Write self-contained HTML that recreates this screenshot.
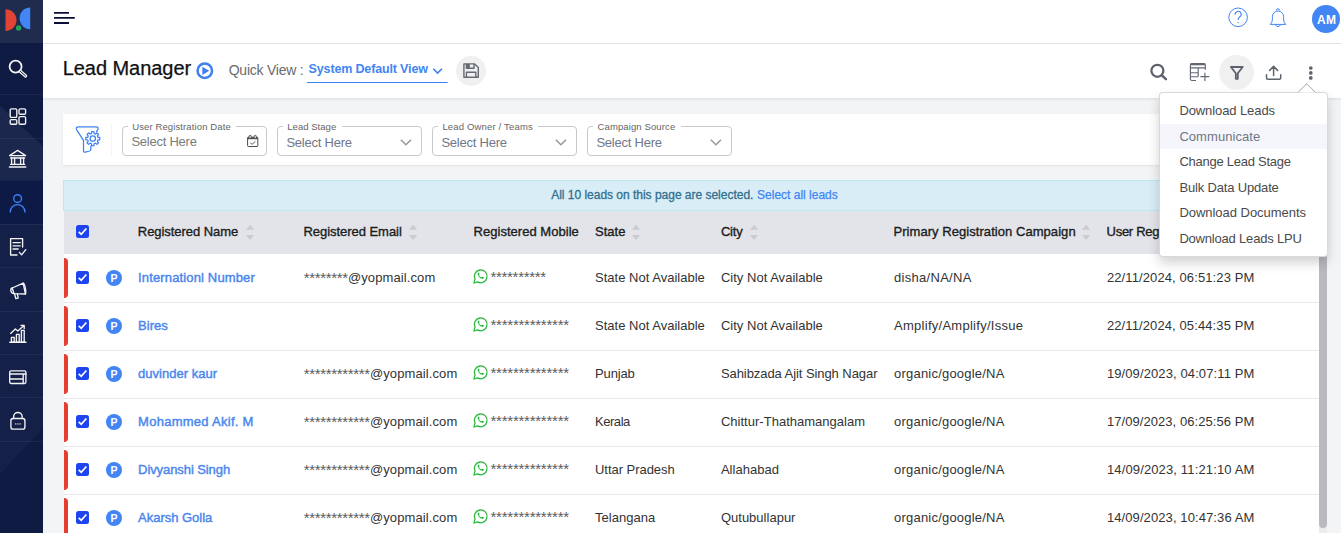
<!DOCTYPE html>
<html lang="en">
<head>
<meta charset="utf-8">
<title>Lead Manager</title>
<style>
*{box-sizing:border-box;margin:0;padding:0}
html,body{width:1341px;height:533px;overflow:hidden;background:#f3f4f6;font-family:"Liberation Sans",Arial,sans-serif;}
body{position:relative}
.abs{position:absolute}
span.t{position:absolute;white-space:pre;line-height:20px;height:20px}
#side{left:0;top:0;width:43px;height:533px;background:#0f1b43;overflow:hidden}
#side .logo{left:0;top:0;width:43px;height:42.5px;background:#1f2c4e}
#side .sep{left:0;width:43px;height:1px;background:rgba(255,255,255,.055)}
#side .band{left:-40px;top:70px;width:120px;height:120px;background:linear-gradient(135deg,rgba(255,255,255,0) 0%,rgba(255,255,255,0) 49%,rgba(255,255,255,.07) 50%,rgba(255,255,255,.05) 100%);}
#top{left:43px;top:0;width:1298px;height:44px;background:#fff;border-bottom:1px solid #e6e6e6}
#title{left:43px;top:44px;width:1298px;height:54px;background:#fff;box-shadow:0 1px 3px rgba(0,0,0,.10)}
#card{left:63px;top:114px;width:1264px;height:51px;background:#fff;box-shadow:0 1px 2px rgba(0,0,0,.07)}
.fld{top:126px;width:145px;height:29.5px;border:1px solid #c9c9c9;border-radius:4px}
.notch{top:125px;height:3px;background:#fff}
#banner{left:63px;top:180px;width:1264px;height:31px;background:#d9edf7;border:1px solid #bce8f1}
#thead{left:64px;top:210.5px;width:1255px;height:43.8px;background:#e2e4e9}
#tbody{left:64px;top:254.3px;width:1255px;height:279px;background:#fff}
.rs{left:64px;width:1255px;height:1px;background:#e9e9e9}
.red{left:64px;width:4px;height:40px;background:#e53e31;border-radius:0 4px 4px 0}
.cb{left:76px;width:13px;height:13px;background:#1a56e6;border-radius:2px}
.pb{left:106px;width:16px;height:16px;border-radius:8px;background:#4285f4}
#sbar{left:1319px;top:210px;width:8px;height:323px;background:#ececee}
#sthumb{left:1319px;top:210px;width:8px;height:318px;background:#b9babd;border-radius:0 0 4px 4px}
#dd{left:1158.5px;top:91.6px;width:169.5px;height:165.4px;background:#fff;border:1px solid rgba(0,0,0,.15);border-radius:4px;box-shadow:0 6px 12px rgba(0,0,0,.175)}
#ddarrow{left:1299.25px;top:86.3px;width:15.5px;height:15.5px;background:#fff;border-left:1px solid rgba(0,0,0,.34);border-top:1px solid rgba(0,0,0,.34);transform:rotate(45deg);clip-path:polygon(0 0,13.6px 0,0 13.6px)}
#ddhl{left:1159.5px;top:124px;width:167.5px;height:25px;background:#f5f6fb}
svg{position:absolute;overflow:visible}
</style>
</head>
<body>
<!-- top bar -->
<div id="top" class="abs"></div>
<div id="title" class="abs"></div>

<!-- sidebar -->
<div id="side" class="abs">
  <svg style="left:0;top:0" width="43" height="533"><path d="M0 106 L43 146.500 V180.500 H0 Z" fill="rgba(255,255,255,.055)"/><path d="M0 224 H43 V428 L0 474 Z" fill="rgba(255,255,255,.022)"/></svg>
  <div class="logo abs"></div>
  <div class="sep abs" style="top:93.5px"></div>
  <div class="sep abs" style="top:137.5px"></div>
  <div class="sep abs" style="top:180.5px"></div>
  <div class="sep abs" style="top:224px"></div>
  <div class="sep abs" style="top:267px"></div>
  <div class="sep abs" style="top:310.5px"></div>
  <div class="sep abs" style="top:354px"></div>
  <div class="sep abs" style="top:397px"></div>
  <div class="sep abs" style="top:440.5px"></div>
  <div class="abs" style="left:0;top:180.5px;width:43px;height:43.5px;background:#0c1a45"></div>
</div>
<!-- logo -->
<svg style="left:0;top:0" width="43" height="43" viewBox="0 0 43 43">
  <path d="M5.5 9.3 A11 10.8 0 0 1 5.5 30.9 Z" fill="#e04435"/>
  <path d="M30.2 7.4 A10.6 10.9 0 0 0 30.2 29.2 Z" fill="#4285f4"/>
  <circle cx="18.6" cy="27.9" r="2.7" fill="#1ea45a"/>
</svg>
<!-- sidebar icons -->
<svg style="left:0;top:43px" width="43" height="490" viewBox="0 43 43 490" fill="none" stroke="#f4f4f4" stroke-width="1.35" stroke-linecap="round" stroke-linejoin="round">
  <!-- search -->
  <circle cx="15.6" cy="66.6" r="6" stroke-width="1.8"/>
  <path d="M20.2 71.2 L25.6 76" stroke-width="3.2"/>
  <path d="M20.4 71.4 L25.4 75.8" stroke="#0f1b43" stroke-width="1"/>
  <!-- dashboard -->
  <rect x="10.2" y="108.8" width="6.6" height="8.6" rx="1.2"/>
  <rect x="19" y="108.8" width="6.6" height="5.4" rx="1.2"/>
  <rect x="10.2" y="119.6" width="6.6" height="4.6" rx="1.2"/>
  <rect x="19" y="116.6" width="6.6" height="7.6" rx="1.2"/>
  <!-- institution -->
  <path d="M9.6 155.6 L17.6 150.4 L25.6 155.6 Z"/>
  <path d="M11.6 158 V164 M14.6 158 V164 M20.6 158 V164 M23.6 158 V164" />
  <path d="M10.6 158 H24.6 M10.6 164.4 H24.6 M9.4 167 H25.8"/>
  <!-- person -->
  <g stroke="#3d7ff5" stroke-width="1.4">
  <circle cx="17.6" cy="198.6" r="3.9"/>
  <path d="M10.2 212 A7.4 7.4 0 0 1 25 212"/>
  </g>
  <!-- doc check -->
  <path d="M22.6 247 V238.6 H10.6 V255 H17"/>
  <path d="M13 242.6 H20.2 M13 245.8 H20.2 M13 249 H18.2"/>
  <path d="M19.4 252.4 L21.6 254.8 L25.8 249.6"/>
  <!-- megaphone -->
  <path d="M12.2 288 L23.2 283.2 L25.4 294 L14 293.6 Z"/>
  <path d="M12.2 288 C9.8 288.8 10.6 293.6 14 293.6"/>
  <path d="M14.6 294 L15.8 298.6 L18.2 298.2 L17.4 294"/>
  <path d="M23.2 283.2 C24.8 283 26.6 293 25.4 294"/>
  <!-- chart -->
  <path d="M9.8 342.2 H26"/>
  <rect x="11.4" y="337.4" width="2.8" height="4.8"/>
  <rect x="16.4" y="334.4" width="2.8" height="7.8"/>
  <rect x="21.4" y="330.4" width="2.8" height="11.8"/>
  <path d="M10.6 333.4 L15.4 329 L17.8 331 L24 325.6 M21 325.4 H24.2 V328.6"/>
  <!-- card -->
  <rect x="9.700" y="370.900" width="16.200" height="12.600" rx="1.400"/>
  <path d="M9.700 374 H25.900 M9.700 379 H23.200 M23.200 374 V383.500"/>
  <!-- lock -->
  <rect x="10.900" y="418.500" width="14" height="10.600" rx="2.200"/>
  <path d="M13.600 418.300 V416.800 A4.300 4.300 0 0 1 22.200 416.800 V418.300"/>
  <path d="M15.700 423.900 h0.100 M17.900 423.900 h0.100 M20.100 423.900 h0.100" stroke-width="1.300"/>
</svg>

<!-- hamburger -->
<svg style="left:43px;top:0" width="60" height="43" viewBox="43 0 60 43" stroke="#0a0f3a" stroke-width="1.9" fill="none">
  <path d="M54 12.9 H69 M54 17.9 H74.8 M54 23 H69"/>
</svg>

<!-- top right icons -->
<svg style="left:1220px;top:0" width="121" height="43" viewBox="1220 0 121 43" fill="none" stroke="#4285f4" stroke-width="1">
  <circle cx="1238.1" cy="17.3" r="9.3"/>
  <path d="M1235.2 14.6 A3 3 0 1 1 1239.6 17 C1238.4 17.8 1238.1 18.4 1238.1 20" stroke-width="1.1"/>
  <circle cx="1238.1" cy="22.6" r="0.7" fill="#4285f4" stroke="none"/>
  <!-- bell -->
  <path d="M1270.2 24.4 C1272.4 22.6 1272.4 20 1272.4 16.6 A5.6 5.6 0 0 1 1283.6 16.6 C1283.6 20 1283.6 22.6 1285.8 24.4 Z" stroke-linejoin="round"/>
  <path d="M1276.4 10.4 A1.6 1.6 0 0 1 1279.6 10.4"/>
  <path d="M1275.600 24.800 A2.600 2.900 0 0 0 1280.400 24.800"/>
  <circle cx="1326" cy="19" r="14" fill="#4285f4" stroke="none"/>
</svg>

<!-- title bar icons -->
<svg style="left:190px;top:44px" width="310" height="54" viewBox="190 44 310 54" fill="none">
  <circle cx="204.800" cy="70.700" r="7.250" stroke="#3f7ff0" stroke-width="2.500"/>
  <path d="M202.300 66.700 L209.200 70.800 L202.300 74.900 Z" fill="#3f7ff0"/>
  <path d="M433.300 68.700 L437.600 73.100 L441.900 68.700" stroke="#3f7ff0" stroke-width="1.600"/>
  <path d="M307 82.500 H447.600" stroke="#3f83f0" stroke-width="1.100"/>
  <circle cx="471" cy="70.800" r="15" fill="#f0f0f0"/>
  <g stroke="#646a72" stroke-width="1.400" stroke-linejoin="round">
  <path d="M463.900 63.900 H474.700 L478.300 67.400 V77.300 H463.900 Z"/>
  <path d="M466.400 64 V68.300 H474 V64"/>
  <rect x="466.400" y="64" width="3.400" height="4.300" fill="#646a72" stroke="none"/>
  <path d="M466.400 77.200 V72.200 H475.800 V77.200"/>
  </g>
</svg>
<svg style="left:1140px;top:44px" width="201" height="54" viewBox="1140 44 201 54" fill="none" stroke="#5d636d">
  <circle cx="1157.400" cy="70.800" r="6" stroke-width="2.300"/>
  <path d="M1161.900 75.300 L1165.900 79.200" stroke-width="2.500" stroke-linecap="round"/>
  <!-- table plus -->
  <g stroke-width="1.15" stroke="#616874">
  <path d="M1205.300 69.800 V65.200 Q1205.300 63.600 1203.700 63.600 H1192 Q1190.400 63.600 1190.400 65.200 V79 Q1190.400 80.500 1192 80.500 H1196"/>
  <path d="M1190.400 64.400 H1205.300" stroke-width="1.8"/>
  <path d="M1190.400 67.800 H1205.300 M1190.400 72.700 H1198.200 M1190.400 76.700 H1198.200 M1198.200 67.800 V76.700"/>
  <path d="M1204.900 72.800 V81 M1200.400 76.600 H1209.300"/>
  </g>
  <circle cx="1236.600" cy="72.300" r="17.400" fill="#f0f0f0" stroke="none"/>
  <path d="M1230.900 67 H1242.700 L1237.800 73.200 V78.800 H1235.800 V73.200 Z" stroke-width="1.8" stroke-linejoin="round" fill="none"/>
  <!-- upload -->
  <g stroke-width="1.5" stroke-linecap="round" stroke-linejoin="round">
  <path d="M1273.600 75.400 V66.600 M1269.600 70.400 L1273.600 66.400 L1277.600 70.400"/>
  <path d="M1266.500 74.800 V77.800 Q1266.500 79.300 1268 79.300 H1279.200 Q1280.700 79.300 1280.700 77.800 V74.800"/>
  </g>
  <g fill="#5d636d" stroke="none">
  <circle cx="1310.800" cy="68" r="1.850"/><circle cx="1310.800" cy="72.950" r="1.850"/><circle cx="1310.800" cy="77.900" r="1.850"/>
  </g>
</svg>

<!-- filter card -->
<div id="card" class="abs"></div>
<div class="abs" style="left:111px;top:124px;width:1px;height:32px;background:#f4f4f4"></div>
<div class="fld abs" style="left:122px"></div>
<div class="fld abs" style="left:277px"></div>
<div class="fld abs" style="left:432px"></div>
<div class="fld abs" style="left:587px"></div>
<div class="notch abs" style="left:127.5px;width:108px"></div>
<div class="notch abs" style="left:282.5px;width:59px"></div>
<div class="notch abs" style="left:437.5px;width:100.5px"></div>
<div class="notch abs" style="left:592.5px;width:88px"></div>
<svg style="left:63px;top:114px" width="700" height="51" viewBox="63 114 700 51" fill="none">
  <!-- funnel gear -->
  <g stroke="#3f83f0" stroke-width="1.25" stroke-linejoin="round" stroke-linecap="round">
  <path d="M83.500 140.300 L76.500 129.600 Q75.600 126.900 78.400 126.900 H96 Q98.800 126.900 97.900 129.400 L96.600 131.600"/>
  <path d="M83.500 140.300 V150.600 Q83.500 152.700 85.500 152.100 L89.600 151 Q90.800 150.600 90.800 149.400 V146"/>
  <circle cx="92.800" cy="138.600" r="2.7"/>
  <path d="M91.52 133.46 L91.63 131.60 L93.97 131.60 L94.08 133.46 L95.53 134.06 L96.93 132.82 L98.58 134.47 L97.34 135.87 L97.94 137.32 L99.80 137.43 L99.80 139.77 L97.94 139.88 L97.34 141.33 L98.58 142.73 L96.93 144.38 L95.53 143.14 L94.08 143.74 L93.97 145.60 L91.63 145.60 L91.52 143.74 L90.07 143.14 L88.67 144.38 L87.02 142.73 L88.26 141.33 L87.66 139.88 L85.80 139.77 L85.80 137.43 L87.66 137.32 L88.26 135.87 L87.02 134.47 L88.67 132.82 L90.07 134.06 Z"/>
  </g>
  <!-- calendar -->
  <g stroke="#4a4a4a" stroke-width="1">
  <rect x="247.600" y="137.200" width="10.200" height="9.300" rx="0.8"/>
  <rect x="247.600" y="137.200" width="10.200" height="2" fill="#4a4a4a" stroke="none"/>
  <rect x="249.100" y="135.300" width="2" height="3.400" rx="1" fill="#dfe8f5" stroke-width="0.9"/>
  <rect x="254.300" y="135.300" width="2" height="3.400" rx="1" fill="#dfe8f5" stroke-width="0.9"/>
  <path d="M250.300 142.800 L252.100 144.300 L255.400 141.400" stroke-width="0.9"/>
  </g>
  <g stroke="#979797" stroke-width="1.5">
  <path d="M400.8 139.8 L405.9 144.8 L411 139.8"/>
  <path d="M555.8 139.8 L560.9 144.8 L566 139.8"/>
  <path d="M710.8 139.8 L715.900 144.8 L721 139.8"/>
  </g>
</svg>

<!-- banner + table -->
<div id="banner" class="abs"></div>
<div id="thead" class="abs"></div>
<div id="tbody" class="abs"></div>
<div class="rs abs" style="top:302px"></div>
<div class="rs abs" style="top:350px"></div>
<div class="rs abs" style="top:398px"></div>
<div class="rs abs" style="top:446px"></div>
<div class="rs abs" style="top:494px"></div>
<svg style="left:245.9px;top:224px" width="9" height="17" viewBox="0 0 9 17"><path d="M0 5.800 L4.100 0.800 L8.200 5.800 Z M0 11.100 L4.100 15.900 L8.200 11.100 Z" fill="#cacbcf"/></svg>
<svg style="left:408.5px;top:224px" width="9" height="17" viewBox="0 0 9 17"><path d="M0 5.800 L4.100 0.800 L8.200 5.800 Z M0 11.100 L4.100 15.900 L8.200 11.100 Z" fill="#cacbcf"/></svg>
<svg style="left:632.3px;top:224px" width="9" height="17" viewBox="0 0 9 17"><path d="M0 5.800 L4.100 0.800 L8.200 5.800 Z M0 11.100 L4.100 15.900 L8.200 11.100 Z" fill="#cacbcf"/></svg>
<svg style="left:750px;top:224px" width="9" height="17" viewBox="0 0 9 17"><path d="M0 5.800 L4.100 0.800 L8.200 5.800 Z M0 11.100 L4.100 15.900 L8.200 11.100 Z" fill="#cacbcf"/></svg>
<svg style="left:1081.8px;top:224px" width="9" height="17" viewBox="0 0 9 17"><path d="M0 5.800 L4.100 0.800 L8.200 5.800 Z M0 11.100 L4.100 15.900 L8.200 11.100 Z" fill="#cacbcf"/></svg>
<svg style="left:76px;top:225px" width="13" height="13" viewBox="0 0 13 13"><rect width="13" height="13" rx="2.500" fill="#1d44ee"/><path d="M2.700 6.900 L5.200 9.300 L10.400 3.500" fill="none" stroke="#fff" stroke-width="1.700"/></svg>
<div class="red abs" style="top:258px"></div>
<svg style="left:76px;top:271px" width="13" height="13" viewBox="0 0 13 13"><rect width="13" height="13" rx="2.500" fill="#1d44ee"/><path d="M2.700 6.900 L5.200 9.300 L10.400 3.500" fill="none" stroke="#fff" stroke-width="1.700"/></svg>
<div class="pb abs" style="top:270.2px"></div>
<svg style="left:473px;top:268px" width="15" height="16" viewBox="0 0 15 16" fill="none"><path d="M1 15 L2 11.3 A6.4 6.4 0 1 1 4.500 13.9 Z" stroke="#2bb741" stroke-width="1.3" stroke-linejoin="round"/><path d="M5.2 4.6 C4.2 5.4 4.6 7.2 6.100 8.900 C7.6 10.6 9.4 11.400 10.5 10.600 C11 10.200 11 9.700 10.800 9.500 L9.500 8.800 C9.200 8.700 9 8.800 8.700 9.200 C8.500 9.500 8.200 9.500 7.600 9.100 C6.900 8.600 6.400 8 6.100 7.400 C6 7.100 6.200 6.900 6.400 6.700 C6.600 6.500 6.600 6.300 6.500 6 L5.900 4.700 C5.700 4.400 5.400 4.400 5.200 4.600 Z" fill="#2bb741"/></svg>
<div class="red abs" style="top:306px"></div>
<svg style="left:76px;top:319px" width="13" height="13" viewBox="0 0 13 13"><rect width="13" height="13" rx="2.500" fill="#1d44ee"/><path d="M2.700 6.900 L5.200 9.300 L10.400 3.500" fill="none" stroke="#fff" stroke-width="1.700"/></svg>
<div class="pb abs" style="top:318.2px"></div>
<svg style="left:473px;top:316px" width="15" height="16" viewBox="0 0 15 16" fill="none"><path d="M1 15 L2 11.3 A6.4 6.4 0 1 1 4.500 13.9 Z" stroke="#2bb741" stroke-width="1.3" stroke-linejoin="round"/><path d="M5.2 4.6 C4.2 5.4 4.6 7.2 6.100 8.900 C7.6 10.6 9.4 11.400 10.5 10.600 C11 10.200 11 9.700 10.800 9.500 L9.500 8.800 C9.200 8.700 9 8.800 8.700 9.200 C8.500 9.500 8.200 9.500 7.600 9.100 C6.900 8.600 6.400 8 6.100 7.400 C6 7.100 6.200 6.900 6.400 6.700 C6.600 6.500 6.600 6.300 6.500 6 L5.900 4.700 C5.700 4.400 5.400 4.400 5.200 4.600 Z" fill="#2bb741"/></svg>
<div class="red abs" style="top:354px"></div>
<svg style="left:76px;top:367px" width="13" height="13" viewBox="0 0 13 13"><rect width="13" height="13" rx="2.500" fill="#1d44ee"/><path d="M2.700 6.900 L5.200 9.300 L10.400 3.500" fill="none" stroke="#fff" stroke-width="1.700"/></svg>
<div class="pb abs" style="top:366.2px"></div>
<svg style="left:473px;top:364px" width="15" height="16" viewBox="0 0 15 16" fill="none"><path d="M1 15 L2 11.3 A6.4 6.4 0 1 1 4.500 13.9 Z" stroke="#2bb741" stroke-width="1.3" stroke-linejoin="round"/><path d="M5.2 4.6 C4.2 5.4 4.6 7.2 6.100 8.900 C7.6 10.6 9.4 11.400 10.5 10.600 C11 10.200 11 9.700 10.800 9.500 L9.500 8.800 C9.200 8.700 9 8.800 8.700 9.200 C8.500 9.500 8.200 9.500 7.600 9.100 C6.900 8.600 6.400 8 6.100 7.400 C6 7.100 6.200 6.900 6.400 6.700 C6.600 6.500 6.600 6.300 6.500 6 L5.900 4.700 C5.700 4.400 5.400 4.400 5.200 4.600 Z" fill="#2bb741"/></svg>
<div class="red abs" style="top:402px"></div>
<svg style="left:76px;top:415px" width="13" height="13" viewBox="0 0 13 13"><rect width="13" height="13" rx="2.500" fill="#1d44ee"/><path d="M2.700 6.900 L5.200 9.300 L10.400 3.500" fill="none" stroke="#fff" stroke-width="1.700"/></svg>
<div class="pb abs" style="top:414.2px"></div>
<svg style="left:473px;top:412px" width="15" height="16" viewBox="0 0 15 16" fill="none"><path d="M1 15 L2 11.3 A6.4 6.4 0 1 1 4.500 13.9 Z" stroke="#2bb741" stroke-width="1.3" stroke-linejoin="round"/><path d="M5.2 4.6 C4.2 5.4 4.6 7.2 6.100 8.900 C7.6 10.6 9.4 11.400 10.5 10.600 C11 10.200 11 9.700 10.800 9.500 L9.500 8.800 C9.200 8.700 9 8.800 8.700 9.200 C8.500 9.500 8.200 9.500 7.600 9.100 C6.900 8.600 6.400 8 6.100 7.400 C6 7.100 6.200 6.900 6.400 6.700 C6.600 6.500 6.600 6.300 6.500 6 L5.900 4.700 C5.700 4.400 5.400 4.400 5.200 4.600 Z" fill="#2bb741"/></svg>
<div class="red abs" style="top:450px"></div>
<svg style="left:76px;top:463px" width="13" height="13" viewBox="0 0 13 13"><rect width="13" height="13" rx="2.500" fill="#1d44ee"/><path d="M2.700 6.900 L5.200 9.300 L10.400 3.500" fill="none" stroke="#fff" stroke-width="1.700"/></svg>
<div class="pb abs" style="top:462.2px"></div>
<svg style="left:473px;top:460px" width="15" height="16" viewBox="0 0 15 16" fill="none"><path d="M1 15 L2 11.3 A6.4 6.4 0 1 1 4.500 13.9 Z" stroke="#2bb741" stroke-width="1.3" stroke-linejoin="round"/><path d="M5.2 4.6 C4.2 5.4 4.6 7.2 6.100 8.900 C7.6 10.6 9.4 11.400 10.5 10.600 C11 10.200 11 9.700 10.800 9.500 L9.500 8.800 C9.200 8.700 9 8.800 8.700 9.200 C8.500 9.500 8.200 9.500 7.600 9.100 C6.900 8.600 6.400 8 6.100 7.400 C6 7.100 6.200 6.900 6.400 6.700 C6.600 6.500 6.600 6.300 6.500 6 L5.900 4.700 C5.700 4.400 5.400 4.400 5.200 4.600 Z" fill="#2bb741"/></svg>
<div class="red abs" style="top:498px"></div>
<svg style="left:76px;top:511px" width="13" height="13" viewBox="0 0 13 13"><rect width="13" height="13" rx="2.500" fill="#1d44ee"/><path d="M2.700 6.900 L5.200 9.300 L10.400 3.500" fill="none" stroke="#fff" stroke-width="1.700"/></svg>
<div class="pb abs" style="top:510.2px"></div>
<svg style="left:473px;top:508px" width="15" height="16" viewBox="0 0 15 16" fill="none"><path d="M1 15 L2 11.3 A6.4 6.4 0 1 1 4.500 13.9 Z" stroke="#2bb741" stroke-width="1.3" stroke-linejoin="round"/><path d="M5.2 4.6 C4.2 5.4 4.6 7.2 6.100 8.900 C7.6 10.6 9.4 11.400 10.5 10.600 C11 10.200 11 9.700 10.800 9.500 L9.500 8.800 C9.200 8.700 9 8.800 8.700 9.200 C8.500 9.500 8.200 9.500 7.600 9.100 C6.900 8.600 6.400 8 6.100 7.400 C6 7.100 6.200 6.900 6.400 6.700 C6.600 6.500 6.600 6.300 6.500 6 L5.900 4.700 C5.700 4.400 5.400 4.400 5.200 4.600 Z" fill="#2bb741"/></svg>
<div id="sbar" class="abs"></div>
<div id="sthumb" class="abs"></div>

<span class="t" style="left:62.7px;top:58.0px;font-size:20px;font-weight:400;color:#111;letter-spacing:-0.047px;-webkit-text-stroke:0.25px #111;">Lead Manager</span>
<span class="t" style="left:228.7px;top:60.0px;font-size:14px;font-weight:400;color:#6b6b6b;letter-spacing:-0.237px;">Quick View :</span>
<span class="t" style="left:308.6px;top:59.0px;font-size:12.5px;font-weight:700;color:#4285f4;letter-spacing:-0.151px;">System Default View</span>
<span class="t" style="left:1316.9px;top:10.0px;font-size:12px;font-weight:700;color:#fff;letter-spacing:0.330px;">AM</span>
<span class="t" style="left:132.2px;top:117.0px;font-size:9.5px;font-weight:400;color:#666;letter-spacing:0.116px;">User Registration Date</span>
<span class="t" style="left:287.3px;top:117.0px;font-size:9.5px;font-weight:400;color:#666;letter-spacing:0.032px;">Lead Stage</span>
<span class="t" style="left:442.4px;top:117.0px;font-size:9.5px;font-weight:400;color:#666;letter-spacing:0.167px;">Lead Owner / Teams</span>
<span class="t" style="left:597.5px;top:117.0px;font-size:9.5px;font-weight:400;color:#666;letter-spacing:0.118px;">Campaign Source</span>
<span class="t" style="left:131.4px;top:132.0px;font-size:13px;font-weight:400;color:#7b7b7b;letter-spacing:-0.245px;">Select Here</span>
<span class="t" style="left:286.4px;top:133.0px;font-size:13px;font-weight:400;color:#70778a;letter-spacing:-0.235px;">Select Here</span>
<span class="t" style="left:441.4px;top:133.0px;font-size:13px;font-weight:400;color:#70778a;letter-spacing:-0.235px;">Select Here</span>
<span class="t" style="left:596.4px;top:133.0px;font-size:13px;font-weight:400;color:#70778a;letter-spacing:-0.235px;">Select Here</span>
<span class="t" style="left:551.2px;top:185.0px;font-size:12px;font-weight:400;color:#31708f;letter-spacing:-0.016px;-webkit-text-stroke:0.3px #31708f;">All 10 leads on this page are selected.</span>
<span class="t" style="left:757.1px;top:185.0px;font-size:12px;font-weight:400;color:#4285f4;letter-spacing:-0.003px;-webkit-text-stroke:0.25px #4285f4;">Select all leads</span>
<span class="t" style="left:137.8px;top:222.0px;font-size:13px;font-weight:400;color:#1c1c1c;letter-spacing:-0.058px;-webkit-text-stroke:0.35px #1c1c1c;">Registered Name</span>
<span class="t" style="left:303.5px;top:222.0px;font-size:13px;font-weight:400;color:#1c1c1c;letter-spacing:-0.044px;-webkit-text-stroke:0.35px #1c1c1c;">Registered Email</span>
<span class="t" style="left:473.5px;top:222.0px;font-size:13px;font-weight:400;color:#1c1c1c;letter-spacing:0.035px;-webkit-text-stroke:0.35px #1c1c1c;">Registered Mobile</span>
<span class="t" style="left:595.0px;top:222.0px;font-size:13px;font-weight:400;color:#1c1c1c;letter-spacing:0.002px;-webkit-text-stroke:0.35px #1c1c1c;">State</span>
<span class="t" style="left:720.9px;top:222.0px;font-size:13px;font-weight:400;color:#1c1c1c;letter-spacing:-0.168px;-webkit-text-stroke:0.35px #1c1c1c;">City</span>
<span class="t" style="left:893.5px;top:222.0px;font-size:13px;font-weight:400;color:#1c1c1c;letter-spacing:0.053px;-webkit-text-stroke:0.35px #1c1c1c;">Primary Registration Campaign</span>
<span class="t" style="left:1106.6px;top:222.0px;font-size:13px;font-weight:400;color:#1c1c1c;letter-spacing:-0.297px;-webkit-text-stroke:0.35px #1c1c1c;">User Reg</span>
<span class="t" style="left:1159.3px;top:222.0px;font-size:13px;font-weight:400;color:#1c1c1c;letter-spacing:0.589px;-webkit-text-stroke:0.35px #1c1c1c;">istration Date</span>
<span class="t" style="left:138.1px;top:268.0px;font-size:13px;font-weight:400;color:#4a86ee;letter-spacing:0.141px;-webkit-text-stroke:0.42px #4a86ee;">Internationl Number</span>
<span class="t" style="left:303.8px;top:268.0px;font-size:15px;font-weight:400;color:#5a5a5a;letter-spacing:-0.332px;">********</span>
<span class="t" style="left:347.9px;top:268.0px;font-size:13px;font-weight:400;color:#333;letter-spacing:0.110px;">@yopmail.com</span>
<span class="t" style="left:490.5px;top:267.0px;font-size:15px;font-weight:400;color:#5a5a5a;letter-spacing:-0.311px;">**********</span>
<span class="t" style="left:595.0px;top:268.0px;font-size:13px;font-weight:400;color:#333;letter-spacing:0.013px;">State Not Available</span>
<span class="t" style="left:720.9px;top:268.0px;font-size:13px;font-weight:400;color:#333;letter-spacing:0.017px;">City Not Available</span>
<span class="t" style="left:894.1px;top:268.0px;font-size:13px;font-weight:400;color:#333;letter-spacing:0.285px;">disha/NA/NA</span>
<span class="t" style="left:1106.9px;top:268.0px;font-size:13px;font-weight:400;color:#333;letter-spacing:0.108px;">22/11/2024, 06:51:23 PM</span>
<span class="t" style="left:138.1px;top:316.0px;font-size:13px;font-weight:400;color:#4a86ee;letter-spacing:0.011px;-webkit-text-stroke:0.42px #4a86ee;">Bires</span>
<span class="t" style="left:490.5px;top:315.0px;font-size:15px;font-weight:400;color:#5a5a5a;letter-spacing:-0.243px;">**************</span>
<span class="t" style="left:595.0px;top:316.0px;font-size:13px;font-weight:400;color:#333;letter-spacing:0.013px;">State Not Available</span>
<span class="t" style="left:720.9px;top:316.0px;font-size:13px;font-weight:400;color:#333;letter-spacing:0.017px;">City Not Available</span>
<span class="t" style="left:894.1px;top:316.0px;font-size:13px;font-weight:400;color:#333;letter-spacing:0.264px;">Amplify/Amplify/Issue</span>
<span class="t" style="left:1106.9px;top:316.0px;font-size:13px;font-weight:400;color:#333;letter-spacing:0.108px;">22/11/2024, 05:44:35 PM</span>
<span class="t" style="left:138.1px;top:364.0px;font-size:13px;font-weight:400;color:#4a86ee;letter-spacing:0.011px;-webkit-text-stroke:0.42px #4a86ee;">duvinder kaur</span>
<span class="t" style="left:303.8px;top:364.0px;font-size:15px;font-weight:400;color:#5a5a5a;letter-spacing:-0.335px;">************</span>
<span class="t" style="left:369.9px;top:364.0px;font-size:13px;font-weight:400;color:#333;letter-spacing:0.110px;">@yopmail.com</span>
<span class="t" style="left:490.5px;top:363.0px;font-size:15px;font-weight:400;color:#5a5a5a;letter-spacing:-0.243px;">**************</span>
<span class="t" style="left:595.0px;top:364.0px;font-size:13px;font-weight:400;color:#333;letter-spacing:-0.130px;">Punjab</span>
<span class="t" style="left:720.9px;top:364.0px;font-size:13px;font-weight:400;color:#333;letter-spacing:-0.068px;">Sahibzada Ajit Singh Nagar</span>
<span class="t" style="left:894.1px;top:364.0px;font-size:13px;font-weight:400;color:#333;letter-spacing:0.206px;">organic/google/NA</span>
<span class="t" style="left:1106.9px;top:364.0px;font-size:13px;font-weight:400;color:#333;letter-spacing:0.108px;">19/09/2023, 04:07:11 PM</span>
<span class="t" style="left:138.1px;top:412.0px;font-size:13px;font-weight:400;color:#4a86ee;letter-spacing:0.267px;-webkit-text-stroke:0.42px #4a86ee;">Mohammed Akif. M</span>
<span class="t" style="left:303.8px;top:412.0px;font-size:15px;font-weight:400;color:#5a5a5a;letter-spacing:-0.335px;">************</span>
<span class="t" style="left:369.9px;top:412.0px;font-size:13px;font-weight:400;color:#333;letter-spacing:0.110px;">@yopmail.com</span>
<span class="t" style="left:490.5px;top:411.0px;font-size:15px;font-weight:400;color:#5a5a5a;letter-spacing:-0.243px;">**************</span>
<span class="t" style="left:595.0px;top:412.0px;font-size:13px;font-weight:400;color:#333;letter-spacing:-0.458px;">Kerala</span>
<span class="t" style="left:720.9px;top:412.0px;font-size:13px;font-weight:400;color:#333;letter-spacing:0.020px;">Chittur-Thathamangalam</span>
<span class="t" style="left:894.1px;top:412.0px;font-size:13px;font-weight:400;color:#333;letter-spacing:0.206px;">organic/google/NA</span>
<span class="t" style="left:1106.9px;top:412.0px;font-size:13px;font-weight:400;color:#333;letter-spacing:0.064px;">17/09/2023, 06:25:56 PM</span>
<span class="t" style="left:138.1px;top:460.0px;font-size:13px;font-weight:400;color:#4a86ee;letter-spacing:-0.084px;-webkit-text-stroke:0.42px #4a86ee;">Divyanshi Singh</span>
<span class="t" style="left:303.8px;top:460.0px;font-size:15px;font-weight:400;color:#5a5a5a;letter-spacing:-0.335px;">************</span>
<span class="t" style="left:369.9px;top:460.0px;font-size:13px;font-weight:400;color:#333;letter-spacing:0.110px;">@yopmail.com</span>
<span class="t" style="left:490.5px;top:459.0px;font-size:15px;font-weight:400;color:#5a5a5a;letter-spacing:-0.243px;">**************</span>
<span class="t" style="left:595.0px;top:460.0px;font-size:13px;font-weight:400;color:#333;letter-spacing:-0.039px;">Uttar Pradesh</span>
<span class="t" style="left:720.9px;top:460.0px;font-size:13px;font-weight:400;color:#333;letter-spacing:0.046px;">Allahabad</span>
<span class="t" style="left:894.1px;top:460.0px;font-size:13px;font-weight:400;color:#333;letter-spacing:0.206px;">organic/google/NA</span>
<span class="t" style="left:1106.9px;top:460.0px;font-size:13px;font-weight:400;color:#333;letter-spacing:0.141px;">14/09/2023, 11:21:10 AM</span>
<span class="t" style="left:138.1px;top:508.0px;font-size:13px;font-weight:400;color:#4a86ee;letter-spacing:-0.020px;-webkit-text-stroke:0.42px #4a86ee;">Akarsh Golla</span>
<span class="t" style="left:303.8px;top:508.0px;font-size:15px;font-weight:400;color:#5a5a5a;letter-spacing:-0.335px;">************</span>
<span class="t" style="left:369.9px;top:508.0px;font-size:13px;font-weight:400;color:#333;letter-spacing:0.110px;">@yopmail.com</span>
<span class="t" style="left:490.5px;top:507.0px;font-size:15px;font-weight:400;color:#5a5a5a;letter-spacing:-0.243px;">**************</span>
<span class="t" style="left:595.0px;top:508.0px;font-size:13px;font-weight:400;color:#333;letter-spacing:0.036px;">Telangana</span>
<span class="t" style="left:720.9px;top:508.0px;font-size:13px;font-weight:400;color:#333;letter-spacing:0.011px;">Qutubullapur</span>
<span class="t" style="left:894.1px;top:508.0px;font-size:13px;font-weight:400;color:#333;letter-spacing:0.206px;">organic/google/NA</span>
<span class="t" style="left:1106.9px;top:508.0px;font-size:13px;font-weight:400;color:#333;letter-spacing:0.097px;">14/09/2023, 10:47:36 AM</span>
<span class="t" style="left:110.6px;top:268.0px;font-size:10.5px;font-weight:700;color:#fff;letter-spacing:0.000px;">P</span>
<span class="t" style="left:110.6px;top:316.0px;font-size:10.5px;font-weight:700;color:#fff;letter-spacing:0.000px;">P</span>
<span class="t" style="left:110.6px;top:364.0px;font-size:10.5px;font-weight:700;color:#fff;letter-spacing:0.000px;">P</span>
<span class="t" style="left:110.6px;top:412.0px;font-size:10.5px;font-weight:700;color:#fff;letter-spacing:0.000px;">P</span>
<span class="t" style="left:110.6px;top:460.0px;font-size:10.5px;font-weight:700;color:#fff;letter-spacing:0.000px;">P</span>
<span class="t" style="left:110.6px;top:508.0px;font-size:10.5px;font-weight:700;color:#fff;letter-spacing:0.000px;">P</span>

<!-- dropdown -->
<div id="dd" class="abs"></div>
<div id="ddarrow" class="abs"></div>
<div id="ddhl" class="abs"></div>
<span class="t" style="left:1179.4px;top:101.0px;font-size:13px;font-weight:400;color:#4a4a4a;letter-spacing:-0.094px;">Download Leads</span>
<span class="t" style="left:1179.4px;top:127.0px;font-size:13px;font-weight:400;color:#6e7783;letter-spacing:0.054px;">Communicate</span>
<span class="t" style="left:1179.4px;top:152.0px;font-size:13px;font-weight:400;color:#4a4a4a;letter-spacing:-0.257px;">Change Lead Stage</span>
<span class="t" style="left:1179.4px;top:178.0px;font-size:13px;font-weight:400;color:#4a4a4a;letter-spacing:-0.164px;">Bulk Data Update</span>
<span class="t" style="left:1179.4px;top:203.0px;font-size:13px;font-weight:400;color:#4a4a4a;letter-spacing:-0.032px;">Download Documents</span>
<span class="t" style="left:1179.4px;top:229.0px;font-size:13px;font-weight:400;color:#4a4a4a;letter-spacing:-0.193px;">Download Leads LPU</span>
</body>
</html>
